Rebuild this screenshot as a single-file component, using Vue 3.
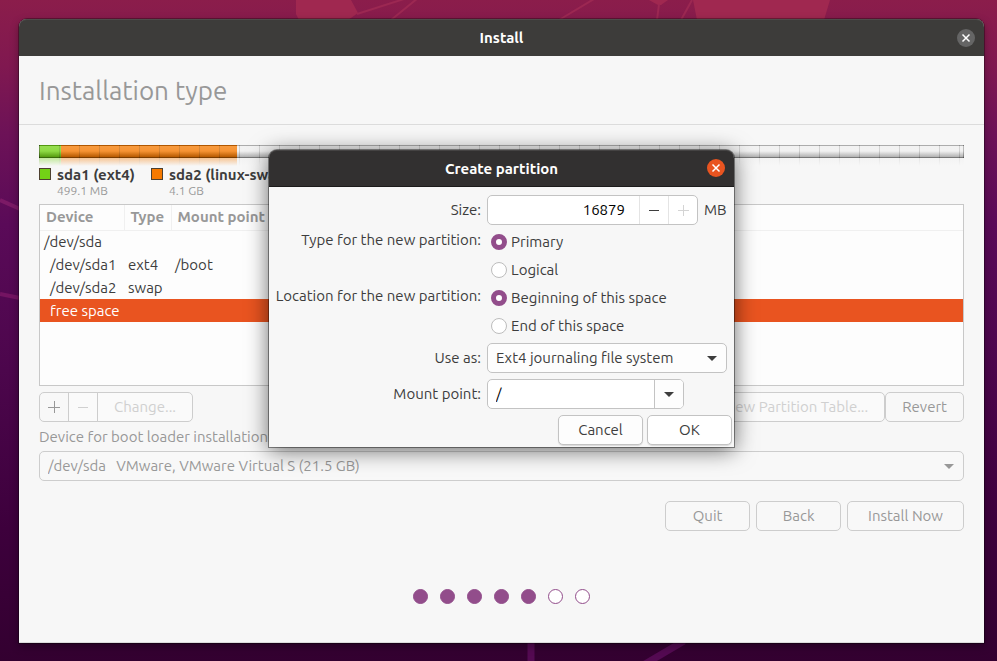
<script setup>
import { ref } from 'vue'

const legend = [
  { name: 'sda1 (ext4)', size: '499.1 MB', color: '#73d216' },
  { name: 'sda2 (linux-swap)', size: '4.1 GB', color: '#f57900' },
  { name: 'free space', size: '16.9 GB', color: '#ffffff' },
]
const segments = [
  { kind: 'ext4', share: 2.4 },
  { kind: 'swap', share: 19 },
  { kind: 'free', share: 78.6 },
]
const rows = [
  { device: '/dev/sda', type: '', mount: '', child: false },
  { device: '/dev/sda1', type: 'ext4', mount: '/boot', child: true },
  { device: '/dev/sda2', type: 'swap', mount: '', child: true },
  { device: 'free space', type: '', mount: '', child: true },
]
const selected = ref(3)
const steps = [true, true, true, true, true, false, false]

const size = ref('16879')
const kind = ref('primary')
const place = ref('beginning')
const mountPoint = ref('/')
</script>

<template>
  <div class="desktop">
    <svg class="wallpaper" viewBox="0 0 997 661" preserveAspectRatio="none" fill="none" aria-hidden="true">
      <path d="M296 0H351L358 13L348 20H299L296 14Z" fill="#a02850" />
      <path d="M693 0H830L824 20H697Z" fill="#a02850" />
      <path d="M649 0L658 5H661L668 0Z" fill="#a02850" />
      <path d="M692 0L681 20M659 4L657 20M357 14L404 -1M391 20L418 -2M559 20L594 -1" stroke="#9c2852" stroke-width="2" />
      <path d="M0 200L20 209" stroke="#7c1a66" stroke-width="4" />
      <path d="M0 294L20 298" stroke="#741462" stroke-width="4" />
      <path d="M645 664L684 641" stroke="#540a52" stroke-width="7" />
      <path d="M531 641V661" stroke="#540a52" stroke-width="7" />
    </svg>

    <main class="window">
      <header class="titlebar">
        <h1>Install</h1>
        <button class="close" type="button" aria-label="Close">
          <svg viewBox="0 0 18 18"><path d="M5.5 5.5L12.5 12.5M12.5 5.5L5.5 12.5" /></svg>
        </button>
      </header>

      <h2 class="heading">Installation type</h2>

      <section class="content">
        <div class="disk">
          <div v-for="s in segments" :key="s.kind" :class="['segment', s.kind]" :style="{ width: s.share + '%' }"></div>
        </div>
        <ul class="legend">
          <li v-for="l in legend" :key="l.name">
            <span class="swatch" :style="{ background: l.color }"></span>
            <span class="entry"><strong>{{ l.name }}</strong><small>{{ l.size }}</small></span>
          </li>
        </ul>

        <div class="tree">
          <table>
            <thead>
              <tr><th class="c-device">Device</th><th class="c-type">Type</th><th>Mount point</th></tr>
            </thead>
            <tbody>
              <tr v-for="(r, i) in rows" :key="r.device" :class="{ selected: i === selected }" @click="selected = i">
                <td :class="{ child: r.child }">{{ r.device }}</td>
                <td>{{ r.type }}</td>
                <td>{{ r.mount }}</td>
              </tr>
            </tbody>
          </table>
        </div>

        <div class="toolbar">
          <div class="group">
            <button class="btn icon" type="button" aria-label="Add">
              <svg viewBox="0 0 12 12"><path d="M0 6.5H12M6.5 0V12" /></svg>
            </button>
            <button class="btn icon" type="button" aria-label="Remove" disabled>
              <svg viewBox="0 0 12 12"><path d="M1 6.5H11" /></svg>
            </button>
            <button class="btn change" type="button" disabled>Change...</button>
          </div>
          <div class="table-actions">
            <button class="btn" type="button" disabled>New Partition Table...</button>
            <button class="btn" type="button">Revert</button>
          </div>
        </div>

        <label class="boot-label" for="boot">Device for boot loader installation:</label>
        <div class="combo boot">
          <select id="boot"><option>/dev/sda &nbsp; VMware, VMware Virtual S (21.5 GB)</option></select>
          <svg class="arrow" viewBox="0 0 10 5"><path d="M0 0H10L5 5Z" /></svg>
        </div>

        <div class="nav">
          <button class="btn" type="button">Quit</button>
          <button class="btn" type="button">Back</button>
          <button class="btn" type="button">Install Now</button>
        </div>
        <div class="steps">
          <span v-for="(done, i) in steps" :key="i" :class="['dot', { done }]"></span>
        </div>
      </section>

      <div class="overlay">
        <form class="dialog" role="dialog" aria-labelledby="dialog-title" @submit.prevent>
          <header class="titlebar">
            <h2 id="dialog-title">Create partition</h2>
            <button class="close" type="button" aria-label="Close">
              <svg viewBox="0 0 18 18"><path d="M5.5 5.5L12.5 12.5M12.5 5.5L5.5 12.5" /></svg>
            </button>
          </header>
          <div class="fields">
            <label class="name" for="size">Size:</label>
            <div class="size-row">
              <div class="spin">
                <input id="size" v-model="size" type="text" inputmode="numeric" />
                <button type="button" aria-label="Decrease">
                  <svg viewBox="0 0 12 12"><path d="M1 6.5H11" /></svg>
                </button>
                <button type="button" aria-label="Increase" disabled>
                  <svg viewBox="0 0 12 12"><path d="M1 6.5H12M6.5 1V12" /></svg>
                </button>
              </div>
              <span>MB</span>
            </div>

            <span id="kind-label" class="name top">Type for the new partition:</span>
            <div class="radios" role="radiogroup" aria-labelledby="kind-label">
              <label><input v-model="kind" type="radio" name="kind" value="primary" />Primary</label>
              <label><input v-model="kind" type="radio" name="kind" value="logical" />Logical</label>
            </div>

            <span id="place-label" class="name top">Location for the new partition:</span>
            <div class="radios" role="radiogroup" aria-labelledby="place-label">
              <label><input v-model="place" type="radio" name="place" value="beginning" />Beginning of this space</label>
              <label><input v-model="place" type="radio" name="place" value="end" />End of this space</label>
            </div>

            <label class="name" for="use-as">Use as:</label>
            <div class="combo use">
              <select id="use-as"><option>Ext4 journaling file system</option></select>
              <svg class="arrow" viewBox="0 0 10 5"><path d="M0 0H10L5 5Z" /></svg>
            </div>

            <label class="name" for="mount">Mount point:</label>
            <div class="mount">
              <input id="mount" v-model="mountPoint" type="text" />
              <button type="button" aria-label="Show mount points">
                <svg class="arrow" viewBox="0 0 10 5"><path d="M0 0H10L5 5Z" /></svg>
              </button>
            </div>
          </div>
          <div class="actions">
            <button type="button">Cancel</button>
            <button class="ok" type="submit">OK</button>
          </div>
        </form>
      </div>
    </main>
  </div>
</template>

<style>
body {
  margin: 0;
}
</style>

<style scoped>
* {
  box-sizing: border-box;
}
.desktop {
  position: relative;
  display: flex;
  min-height: 100vh;
  padding: 19px 13px 18px 19px;
  background: linear-gradient(#8b1d4b 0, #801850 10%, #6d1257 20%, #5a0a58 34%, #4c064c 56%, #3d003c 80%, #330030 100%);
  font: 15px/18px Ubuntu, 'Noto Sans', sans-serif;
  color: #3d3d3d;
}
.wallpaper {
  position: absolute;
  inset: 0;
  width: 100%;
  height: 100%;
}
h1, h2, ul {
  margin: 0;
  padding: 0;
}
button, input, select {
  font: inherit;
  color: inherit;
}
.window {
  position: relative;
  flex: 1;
  display: flex;
  flex-direction: column;
  background: #f7f7f7;
  border-radius: 8px 8px 0 0;
  box-shadow: 0 0 0 1px rgba(0, 0, 0, 0.3), 0 3px 9px rgba(0, 0, 0, 0.35);
}
.titlebar {
  display: grid;
  grid-template-columns: 36px 1fr 36px;
  align-items: center;
  height: 37px;
  border-radius: 8px 8px 0 0;
  background: #3d3c3a;
  box-shadow: inset 0 1px #4d4c4a;
  color: #fff;
}
.titlebar h1, .titlebar h2 {
  grid-column: 2;
  font-size: 15px;
  line-height: 19px;
  font-weight: 700;
  text-align: center;
}
.close {
  display: grid;
  width: 18px;
  height: 18px;
  margin-left: 9px;
  padding: 0;
  border: 0;
  border-radius: 50%;
  background: #656565;
}
.close svg {
  width: 18px;
  height: 18px;
  stroke: #fff;
  stroke-width: 1.5;
}
.heading {
  padding: 19px 20px 17px;
  border-bottom: 1px solid #dcdcdc;
  font-size: 26px;
  line-height: 32px;
  font-weight: 400;
  color: #989898;
}
.content {
  flex: 1;
  display: flex;
  flex-direction: column;
  padding: 20px 20px 0;
  border-bottom: 1px solid #dcdcdc;
}
.disk {
  position: relative;
  display: flex;
  height: 22px;
}
.disk::after {
  content: '';
  position: absolute;
  inset: 0;
  background:
    linear-gradient(rgba(0, 0, 0, 0.28) 0 1px, rgba(255, 255, 255, 0.25) 1px, rgba(255, 255, 255, 0.2) 6px, rgba(0, 0, 0, 0.26) 12px, rgba(0, 0, 0, 0.5) 12px 13px, rgba(247, 247, 247, 0.6) 13px, #f7f7f7 21px),
    linear-gradient(rgba(0, 0, 0, 0.3), rgba(0, 0, 0, 0.3)) 0 0 / 1px 13px no-repeat,
    linear-gradient(rgba(0, 0, 0, 0.3), rgba(0, 0, 0, 0.3)) 100% 0 / 1px 13px no-repeat,
    repeating-linear-gradient(90deg, rgba(0, 0, 0, 0.17) 0 1px, transparent 1px 20px);
}
.segment.ext4 {
  background: #73d216;
}
.segment.swap {
  background: #f57900;
}
.segment.free {
  background: #eeeeee;
}
.legend {
  display: flex;
  gap: 16px;
  height: 37px;
  list-style: none;
}
.legend li {
  display: flex;
  gap: 6px;
}
.swatch {
  width: 12px;
  height: 12px;
  margin-top: 1px;
  border: 1px solid #4d4030;
}
.entry {
  display: flex;
  flex-direction: column;
}
.entry strong {
  line-height: 16px;
}
.entry small {
  font-size: 12px;
  line-height: 16px;
  color: #999;
}
.tree {
  height: 182px;
  border: 1px solid #c8c8c8;
  background: #fdfdfd;
}
table {
  width: 100%;
  border-collapse: collapse;
  table-layout: fixed;
}
th {
  height: 25px;
  padding: 0 6px;
  border-bottom: 1px solid #f0f0f0;
  border-right: 1px solid #f0f0f0;
  text-align: left;
  color: #989898;
}
th:last-child {
  border-right: 0;
}
.c-device {
  width: 84px;
}
.c-type {
  width: 47px;
}
td {
  height: 23px;
  padding: 0 4px;
  white-space: nowrap;
}
td.child {
  padding-left: 10px;
}
.selected {
  background: #e95420;
  color: #fff;
}
.toolbar {
  display: flex;
  justify-content: space-between;
  margin-top: 6px;
}
.group, .table-actions {
  display: flex;
}
.btn {
  height: 30px;
  padding: 0 16px;
  border: 1px solid #cdcdcd;
  border-radius: 5px;
  background: #f8f8f8;
  color: #989898;
}
.btn:disabled {
  background: #fafafa;
  color: #d0d0d0;
}
.btn.icon {
  display: grid;
  place-items: center;
  width: 30px;
  padding: 0;
}
.btn svg, .spin svg {
  width: 12px;
  height: 12px;
  stroke: currentColor;
}
.group .btn:not(:last-child) {
  margin-right: -1px;
  border-top-right-radius: 0;
  border-bottom-right-radius: 0;
}
.group .btn:not(:first-child) {
  border-top-left-radius: 0;
  border-bottom-left-radius: 0;
}
.change {
  min-width: 95px;
}
.boot-label {
  margin: 6px 0 5px;
  color: #989898;
}
.combo {
  display: grid;
  grid-template-columns: 1fr 20px;
  align-items: center;
}
.combo select {
  grid-area: 1 / 1 / 2 / 3;
  appearance: none;
  width: 100%;
  height: 30px;
  padding: 0 8px;
  border: 1px solid #c3c3c3;
  border-radius: 5px;
  background: #fdfdfd;
}
.arrow {
  grid-area: 1 / 2;
  width: 10px;
  height: 5px;
  fill: currentColor;
  pointer-events: none;
}
.boot {
  color: #989898;
}
.boot select {
  border-color: #cdcdcd;
  background: #f8f8f8;
}
.nav {
  display: flex;
  justify-content: flex-end;
  gap: 6px;
  margin-top: 20px;
}
.nav .btn {
  min-width: 85px;
  padding: 0 20px;
}
.steps {
  display: flex;
  justify-content: center;
  gap: 12px;
  margin-top: 58px;
}
.dot {
  width: 15px;
  height: 15px;
  border: 1px solid #924d8b;
  border-radius: 50%;
  background: #fff;
}
.dot.done {
  background: #924d8b;
}
.overlay {
  position: absolute;
  inset: 131px 0 auto;
  display: flex;
  justify-content: center;
}
.dialog {
  width: 465px;
  border-radius: 8px 8px 0 0;
  background: #f7f7f7;
  box-shadow: 0 0 0 1px rgba(0, 0, 0, 0.4), 0 3px 22px rgba(0, 0, 0, 0.6);
}
.dialog .titlebar {
  border-bottom: 1px solid #1c1b1b;
  background: #323030;
  box-shadow: inset 0 1px #454343;
}
.dialog .close {
  background: #e95420;
}
.fields {
  display: grid;
  grid-template-columns: 212px 1fr;
  column-gap: 6px;
  row-gap: 6px;
  padding: 8px 8px 0 0;
}
.name {
  align-self: center;
  text-align: right;
  white-space: nowrap;
}
.name.top {
  align-self: start;
}
.size-row {
  display: flex;
  align-items: center;
  gap: 6px;
}
.spin, .mount {
  display: flex;
  height: 30px;
  border: 1px solid #c3c3c3;
  border-radius: 5px;
  background: #fff;
  overflow: hidden;
}
.spin {
  width: 211px;
}
.spin input, .mount input {
  flex: 1;
  min-width: 0;
  padding: 0 8px;
  border: 0;
  background: none;
  color: #000;
  outline: none;
}
.spin input {
  padding-right: 14px;
  text-align: right;
}
.spin button, .mount button {
  display: grid;
  place-items: center;
  width: 29px;
  padding: 0;
  border: 0;
  border-left: 1px solid #e4e4e4;
  background: none;
}
.spin button:disabled {
  color: #d4d4d4;
}
.mount button {
  border-color: #c3c3c3;
  background: #fdfdfd;
}
.mount .arrow {
  grid-area: auto;
}
.radios {
  display: flex;
  flex-direction: column;
  gap: 6px;
  padding: 0 4px;
}
.radios label {
  display: flex;
  align-items: center;
  gap: 4px;
  height: 22px;
}
.radios input {
  appearance: none;
  width: 16px;
  height: 16px;
  margin: 0;
  border: 1px solid #bdbdbd;
  border-radius: 50%;
  background: #fff;
}
.radios input:checked {
  border: 5px solid #924d8b;
}
.mount {
  width: 197px;
}
.actions {
  display: flex;
  justify-content: flex-end;
  gap: 4px;
  padding: 6px 2px 2px;
}
.actions button {
  width: 85px;
  height: 30px;
  padding: 0;
  border: 1px solid #c3c3c3;
  border-radius: 5px;
  background: #fdfdfd;
  box-shadow: 0 1px 1px rgba(0, 0, 0, 0.12);
}
.actions .ok {
  background: #fff;
}
</style>
